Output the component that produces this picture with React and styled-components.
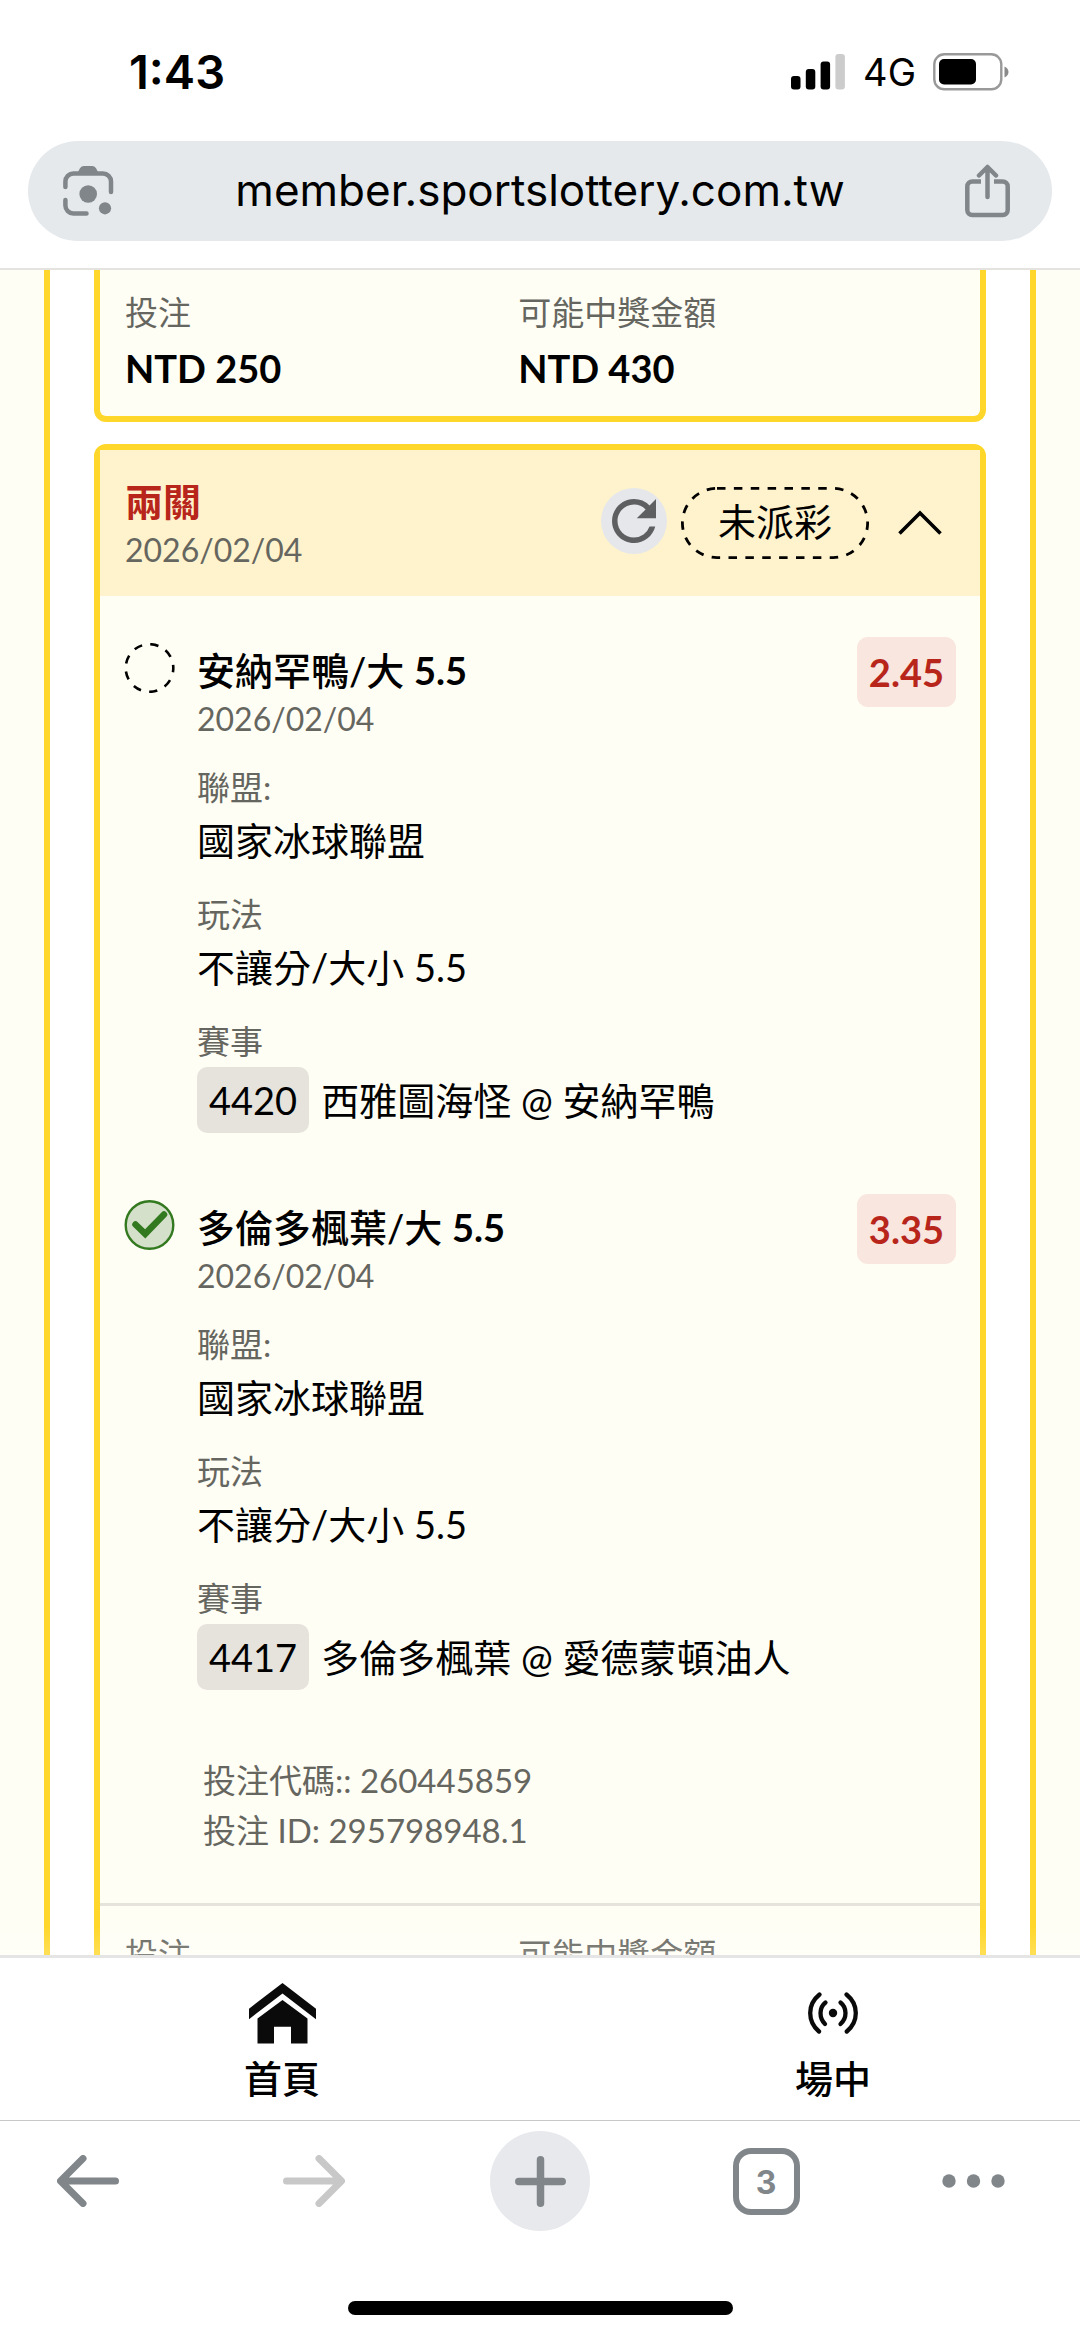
import styled, { createGlobalStyle, css } from 'styled-components';
import { MdRefresh } from 'react-icons/md';

const GlobalStyle = createGlobalStyle`
  * {
    margin: 0;
    padding: 0;
    box-sizing: border-box;
  }
  body {
    background: #fff;
    color: #000;
    font-family: Lato, "Noto Sans CJK TC", sans-serif;
  }
  button {
    border: none;
    background: none;
    color: inherit;
    font: inherit;
    cursor: pointer;
  }
  a {
    color: inherit;
    text-decoration: none;
  }
  svg {
    display: block;
    flex: none;
  }
`;

const Page = styled.div`
  display: flex;
  flex-direction: column;
  height: 100vh;
`;

/* phone status bar + address bar */
const StatusBar = styled.div`
  display: flex;
  align-items: center;
  justify-content: space-between;
  height: 141px;
  padding: 2px 70px 0 129px;
  font-family: Inter, sans-serif;
`;
const Clock = styled.time`
  font-size: 47px;
  font-weight: 600;
`;
const StatusIcons = styled.div`
  display: flex;
  align-items: center;
  gap: 17px;
  font-size: 38px;
`;
const AddressWrapper = styled.div`
  padding: 0 28px 27px;
  border-bottom: 2px solid #e4e3df;
`;
const AddressBar = styled.div`
  display: flex;
  align-items: center;
  justify-content: space-between;
  height: 100px;
  padding: 0 42px 0 35px;
  border-radius: 50px;
  background: #e5e9ec;
  color: #80868a;
`;
const AddressInput = styled.input`
  flex: 1;
  min-width: 0;
  padding-bottom: 2px;
  border: none;
  outline: none;
  background: none;
  color: #000;
  font-family: Inter, sans-serif;
  font-size: 44px;
  text-align: center;
`;

/* bet slips */
const Content = styled.main`
  position: relative;
  flex: 1;
  min-height: 0;
  overflow: hidden;
  padding: 0 44px;
  background: #fffef5;
  &::after {
    content: "";
    position: absolute;
    right: 0;
    bottom: 0;
    left: 0;
    height: 28px;
    background: linear-gradient(rgba(255, 255, 255, 0), rgba(255, 255, 255, 0.2));
  }
`;
const SlipList = styled.div`
  display: flex;
  flex-direction: column;
  gap: 22px;
  padding: 0 44px;
  border: solid #ffd72b;
  border-width: 0 6px;
  background: #fff;
`;
const Slip = styled.article`
  border: 6px solid #ffd72b;
  border-radius: 12px;
  background: #fffef5;
  ${(props) => props.$continued && css`
    border-top: none;
    border-top-left-radius: 0;
    border-top-right-radius: 0;
  `}
`;
const SlipHeader = styled.header`
  display: flex;
  align-items: center;
  justify-content: space-between;
  height: 146px;
  padding: 0 24px 0 25px;
  background: #fff3cd;
`;
const SlipHeading = styled.div`
  padding-top: 4px;
`;
const SlipTitle = styled.h2`
  color: #b8261b;
  font-size: 38px;
  line-height: 50px;
`;
const DateText = styled.p`
  color: #666660;
  font-size: 32px;
  line-height: 48px;
`;
const SlipActions = styled.div`
  display: flex;
  align-items: center;
  gap: 14px;
`;
const RefreshButton = styled.button`
  width: 66px;
  height: 66px;
  margin-bottom: 4px;
  border-radius: 50%;
  background: #e5e7ea;
  color: #5d5f61;
`;
const Status = styled.span`
  position: relative;
  padding: 0 37px 4px;
  font-size: 38px;
  line-height: 68px;
  svg {
    position: absolute;
    top: 0;
    left: 0;
    width: 100%;
    height: 100%;
  }
`;
const ToggleButton = styled.button`
  display: flex;
  align-items: center;
  justify-content: center;
  width: 73px;
  height: 72px;
`;
const Legs = styled.div`
  display: flex;
  flex-direction: column;
  gap: 59px;
  padding: 41px 24px 0;
`;
const LegRow = styled.section`
  display: flex;
  align-items: flex-start;
  gap: 22px;
`;
const LegIcon = styled.div`
  padding-top: 6px;
`;
const LegBody = styled.div`
  flex: 1;
  padding-top: 8px;
`;
const LegTitle = styled.h3`
  font-size: 38px;
  font-weight: 500;
  line-height: 50px;
`;
const Odds = styled.span`
  padding: 0 12px;
  border-radius: 11px;
  background: #f8e6df;
  color: #b8261b;
  font-size: 38px;
  font-weight: 700;
  line-height: 70px;
`;
const Fields = styled.dl`
  display: flex;
  flex-direction: column;
  gap: 21px;
  padding-top: 20px;
`;
const Label = styled.dt`
  padding-bottom: 2px;
  color: #666660;
  font-size: 33px;
  line-height: 48px;
`;
const Value = styled.dd`
  display: flex;
  align-items: center;
  gap: 12px;
  padding-bottom: 2px;
  font-size: 38px;
  line-height: 54px;
`;
const MatchCode = styled.span`
  padding: 0 12px;
  border-radius: 10px;
  background: #e6e3dc;
  line-height: 66px;
`;
const Codes = styled.div`
  padding: 63px 24px 48px 103px;
  color: #666660;
  font-size: 33px;
  line-height: 50px;
`;
const Summary = styled.dl`
  display: grid;
  grid-template-columns: 9fr 10fr;
  padding: ${(props) => (props.$divided ? '24px' : '18px')} 25px 20px;
  border-top: ${(props) => (props.$divided ? '3px solid #e6e3dc' : 'none')};
`;
const Amount = styled.dd`
  padding-top: 2px;
  font-size: 38px;
  font-weight: 700;
  line-height: 56px;
`;

/* site navigation */
const BottomNav = styled.nav`
  display: flex;
  justify-content: space-between;
  height: 165px;
  padding: 24px 209px 0 244px;
  border-top: 3px solid #e5e5e5;
`;
const NavLink = styled.a`
  display: flex;
  flex-direction: column;
  align-items: center;
  font-size: 38px;
  font-weight: 500;
  line-height: 66px;
  font-family: "Noto Sans CJK TC", sans-serif;
`;
const NavIcon = styled.span`
  display: flex;
  align-items: center;
  height: 62px;
`;

/* browser toolbar */
const Toolbar = styled.div`
  display: flex;
  justify-content: space-between;
  padding: 10px 38px 0;
  border-top: 1px solid #c8c8c8;
  color: #80868a;
`;
const ToolButton = styled.button`
  display: flex;
  align-items: center;
  justify-content: ${(props) => props.$align || 'center'};
  width: 100px;
  height: 100px;
  border-radius: 50%;
  background: ${(props) => (props.$filled ? '#e8e9ed' : 'none')};
  &:disabled {
    color: #c8c8c8;
  }
`;
const TabCount = styled.span`
  width: 67px;
  height: 67px;
  border: 6px solid #80868a;
  border-radius: 18px;
  font-family: Inter, sans-serif;
  font-size: 32px;
  font-weight: 700;
  line-height: 57px;
`;
const HomeIndicator = styled.div`
  width: 385px;
  height: 14px;
  margin: 70px auto 22px;
  border-radius: 7px;
  background: #000;
`;

const SignalIcon = () => (
  <svg width="55" height="36" viewBox="0 0 55 36">
    <rect x="0" y="22" width="9.5" height="13.5" rx="3" />
    <rect x="14.8" y="15" width="9.5" height="20.5" rx="3" />
    <rect x="29.6" y="7.5" width="9.5" height="28" rx="3" />
    <rect x="44.4" y="0" width="9.5" height="35.5" rx="3" fill="#ccc" />
  </svg>
);

const BatteryIcon = () => (
  <svg width="77" height="38" viewBox="0 0 77 38">
    <rect x="1.3" y="1.3" width="67" height="35" rx="10" fill="none" stroke="#999" strokeWidth="2.4" />
    <rect x="6" y="6" width="37" height="25.5" rx="5" />
    <path d="M71.5 13.5c2.5 1 4 3 4 5.5s-1.5 4.5-4 5.5z" fill="#8a8a8a" />
  </svg>
);

const LensIcon = () => (
  <svg width="52" height="52" viewBox="0 0 52 52" fill="none" stroke="currentColor" strokeWidth="4.5" strokeLinecap="round">
    <path d="M2.4 22v-5.5a8 8 0 0 1 8-8H40a8 8 0 0 1 8 8V27" />
    <path d="M2.4 35v5.5a8 8 0 0 0 8 8H23.5" />
    <path d="M14 9l2.8-5.500Q18 1 20.5 1h9Q32 1 33.200 3.500L36 9z" fill="currentColor" stroke="none" />
    <circle cx="25.2" cy="29" r="8.8" fill="currentColor" stroke="none" />
    <circle cx="42" cy="43.3" r="6.1" fill="currentColor" stroke="none" />
  </svg>
);

const ShareIcon = () => (
  <svg width="45" height="54" viewBox="0 0 45 54" fill="none" stroke="currentColor" strokeWidth="4.5">
    <path d="M16 17.5H7.3a5 5 0 0 0-5 5V46a5 5 0 0 0 5 5h30.4a5 5 0 0 0 5-5V22.5a5 5 0 0 0-5-5H29" />
    <path d="M22.5 33V3.5M14 11.5l8.5-8.500 8.5 8.500" strokeLinecap="round" strokeLinejoin="round" />
  </svg>
);

const ChevronIcon = () => (
  <svg width="44" height="26" viewBox="0 0 44 26" fill="none" stroke="#000" strokeWidth="3.6">
    <path d="M1.5 23.5L22 3l20.5 20.5" />
  </svg>
);

const DashedOutline = () => (
  <svg viewBox="0 0 188 72" fill="none" stroke="#000" strokeWidth="2.8" preserveAspectRatio="none">
    <rect x="1.4" y="1.4" width="185.2" height="69.2" rx="34.6" strokeDasharray="8.5 8.37" />
  </svg>
);

const PendingIcon = () => (
  <svg width="51" height="50" viewBox="0 0 51 50">
    <circle cx="25.5" cy="25" r="23.8" fill="none" stroke="#000" strokeWidth="2.6" strokeDasharray="8.3 8.3" strokeDashoffset="4" />
  </svg>
);

const WonIcon = () => (
  <svg width="51" height="50" viewBox="0 0 51 50" fill="none" stroke="#33791f">
    <circle cx="25.5" cy="25" r="23.8" fill="#d5e0cb" strokeWidth="2.4" />
    <path d="M11.5 24.5l9.7 9.3L40 14.5" strokeWidth="6.5" strokeLinecap="round" />
  </svg>
);

const HomeIcon = () => (
  <svg width="67" height="61" viewBox="0 0 67 61" fill="#0a0a0a">
    <path d="M0 25.7L33.5 0 67 25.7V36.2L33.5 10.5 0 36.2z" />
    <path d="M33.5 17L58.5 35.5V60.5H42V43.8H25V60.5H8.5V35.5z" />
  </svg>
);

const LiveIcon = () => (
  <svg width="50" height="42" viewBox="0 0 50 42" fill="none" stroke="#0a0a0a" strokeWidth="4.3" strokeLinecap="round">
    <path d="M11.5 2.5Q2.2 10 2.2 21t8.8 18.5M38.5 2.5Q47.8 10 47.8 21t-9 18.5" />
    <path d="M17.5 10.5Q12.5 14.5 12.5 21t4.5 11M32.5 10.5Q37.5 14.5 37.5 21t-5 11" />
    <circle cx="25" cy="21" r="4.2" fill="#0a0a0a" stroke="none" />
  </svg>
);

const ArrowIcon = ({ forward }) => (
  <svg width="62" height="52" viewBox="0 0 62 52" fill="none" stroke="currentColor" strokeWidth="7" strokeLinecap="round" strokeLinejoin="round">
    {forward
      ? <path d="M3.5 26H58M36 3.5L58.5 26 36 48.5" />
      : <path d="M58.5 26H4M26 3.5L3.5 26 26 48.5" />}
  </svg>
);

const PlusIcon = () => (
  <svg width="51" height="51" viewBox="0 0 51 51" stroke="currentColor" strokeWidth="7.5" strokeLinecap="round">
    <path d="M25.5 3.8V47.2M3.8 25.5H47.2" />
  </svg>
);

const DotsIcon = () => (
  <svg width="64" height="14" viewBox="0 0 64 14" fill="currentColor">
    <circle cx="7" cy="7" r="6.7" />
    <circle cx="31.5" cy="7" r="6.7" />
    <circle cx="56" cy="7" r="6.7" />
  </svg>
);

const legs = [
  {
    pick: '安納罕鴨/大',
    line: '5.5',
    date: '2026/02/04',
    league: '國家冰球聯盟',
    market: '不讓分/大小 5.5',
    code: '4420',
    match: '西雅圖海怪 @ 安納罕鴨',
    odds: '2.45',
    won: false,
  },
  {
    pick: '多倫多楓葉/大',
    line: '5.5',
    date: '2026/02/04',
    league: '國家冰球聯盟',
    market: '不讓分/大小 5.5',
    code: '4417',
    match: '多倫多楓葉 @ 愛德蒙頓油人',
    odds: '3.35',
    won: true,
  },
];

function Leg({ leg }) {
  return (
    <LegRow>
      <LegIcon>{leg.won ? <WonIcon /> : <PendingIcon />}</LegIcon>
      <LegBody>
        <LegTitle>{leg.pick} <b>{leg.line}</b></LegTitle>
        <DateText>{leg.date}</DateText>
        <Fields>
          <div>
            <Label>聯盟:</Label>
            <Value>{leg.league}</Value>
          </div>
          <div>
            <Label>玩法</Label>
            <Value>{leg.market}</Value>
          </div>
          <div>
            <Label>賽事</Label>
            <Value><MatchCode>{leg.code}</MatchCode>{leg.match}</Value>
          </div>
        </Fields>
      </LegBody>
      <Odds>{leg.odds}</Odds>
    </LegRow>
  );
}

function BetSummary({ stake, payout, divided }) {
  return (
    <Summary $divided={divided}>
      <div>
        <Label>投注</Label>
        <Amount>{stake}</Amount>
      </div>
      <div>
        <Label>可能中獎金額</Label>
        <Amount>{payout}</Amount>
      </div>
    </Summary>
  );
}

export default function App() {
  return (
    <>
      <GlobalStyle />
      <Page>
        <StatusBar>
          <Clock>1:43</Clock>
          <StatusIcons><SignalIcon />4G<BatteryIcon /></StatusIcons>
        </StatusBar>
        <AddressWrapper>
          <AddressBar>
            <button aria-label="Google Lens"><LensIcon /></button>
            <AddressInput aria-label="網址" readOnly value="member.sportslottery.com.tw" />
            <button aria-label="分享"><ShareIcon /></button>
          </AddressBar>
        </AddressWrapper>

        <Content>
          <SlipList>
            <Slip $continued>
              <BetSummary stake="NTD 250" payout="NTD 430" />
            </Slip>
            <Slip>
              <SlipHeader>
                <SlipHeading>
                  <SlipTitle>兩關</SlipTitle>
                  <DateText>2026/02/04</DateText>
                </SlipHeading>
                <SlipActions>
                  <RefreshButton aria-label="重新整理"><MdRefresh size={66} /></RefreshButton>
                  <Status><DashedOutline />未派彩</Status>
                  <ToggleButton aria-label="收合" aria-expanded="true"><ChevronIcon /></ToggleButton>
                </SlipActions>
              </SlipHeader>
              <Legs>
                {legs.map((leg) => <Leg key={leg.code} leg={leg} />)}
              </Legs>
              <Codes>
                <p>投注代碼:: 260445859</p>
                <p>投注 ID: 295798948.1</p>
              </Codes>
              <BetSummary divided />
            </Slip>
          </SlipList>
        </Content>

        <BottomNav>
          <NavLink href="#home"><NavIcon><HomeIcon /></NavIcon>首頁</NavLink>
          <NavLink href="#live"><NavIcon><LiveIcon /></NavIcon>場中</NavLink>
        </BottomNav>
        <Toolbar>
          <ToolButton aria-label="上一頁"><ArrowIcon /></ToolButton>
          <ToolButton aria-label="下一頁" disabled><ArrowIcon forward /></ToolButton>
          <ToolButton aria-label="新分頁" $filled><PlusIcon /></ToolButton>
          <ToolButton aria-label="分頁"><TabCount>3</TabCount></ToolButton>
          <ToolButton aria-label="更多" $align="flex-start"><DotsIcon /></ToolButton>
        </Toolbar>
        <HomeIndicator />
      </Page>
    </>
  );
}
